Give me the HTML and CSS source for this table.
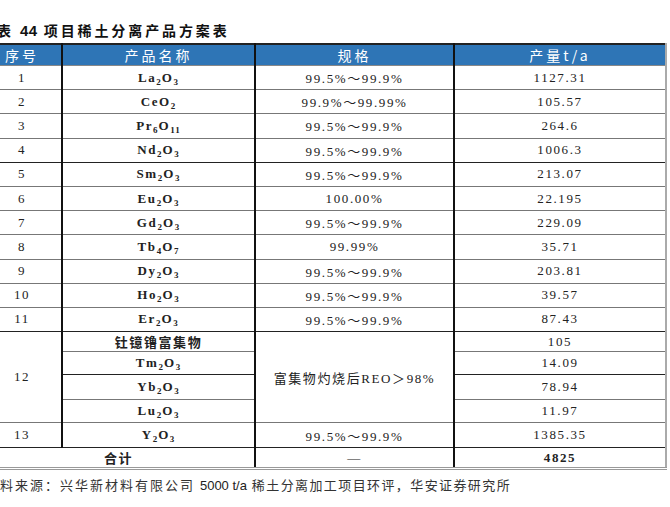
FILE: index.html
```html
<!DOCTYPE html>
<html lang="zh">
<head>
<meta charset="utf-8">
<link rel="stylesheet" href="styles.css">
</head>
<body>
<div class="page">
  <div class="title">表 <span class="num">44</span> 项目稀土分离产品方案表</div>
  <table class="tbl">
    <colgroup>
      <col class="c1"><col class="c2"><col class="c3"><col class="c4">
    </colgroup>
    <thead>
      <tr class="head"><th>序号</th><th>产品名称</th><th>规格</th><th>产量t/a</th></tr>
    </thead>
    <tbody>
      <tr class="r"><td>1</td><td class="f">La<sub>2</sub>O<sub>3</sub></td><td>99.5%～99.9%</td><td>1127.31</td></tr>
      <tr class="r"><td>2</td><td class="f">CeO<sub>2</sub></td><td>99.9%～99.99%</td><td>105.57</td></tr>
      <tr class="r"><td>3</td><td class="f">Pr<sub>6</sub>O<sub>11</sub></td><td>99.5%～99.9%</td><td>264.6</td></tr>
      <tr class="r dk"><td>4</td><td class="f">Nd<sub>2</sub>O<sub>3</sub></td><td>99.5%～99.9%</td><td>1006.3</td></tr>
      <tr class="r"><td>5</td><td class="f">Sm<sub>2</sub>O<sub>3</sub></td><td>99.5%～99.9%</td><td>213.07</td></tr>
      <tr class="r"><td>6</td><td class="f">Eu<sub>2</sub>O<sub>3</sub></td><td>100.00%</td><td>22.195</td></tr>
      <tr class="r"><td>7</td><td class="f">Gd<sub>2</sub>O<sub>3</sub></td><td>99.5%～99.9%</td><td>229.09</td></tr>
      <tr class="r"><td>8</td><td class="f">Tb<sub>4</sub>O<sub>7</sub></td><td>99.99%</td><td>35.71</td></tr>
      <tr class="r"><td>9</td><td class="f">Dy<sub>2</sub>O<sub>3</sub></td><td>99.5%～99.9%</td><td>203.81</td></tr>
      <tr class="r"><td>10</td><td class="f">Ho<sub>2</sub>O<sub>3</sub></td><td>99.5%～99.9%</td><td>39.57</td></tr>
      <tr class="r dk"><td>11</td><td class="f">Er<sub>2</sub>O<sub>3</sub></td><td>99.5%～99.9%</td><td>87.43</td></tr>
      <tr class="s1"><td rowspan="4">12</td><td class="f cn">钍镱镥富集物</td><td rowspan="4" class="cnt">富集物灼烧后REO＞98%</td><td>105</td></tr>
      <tr class="s2 dk"><td class="f">Tm<sub>2</sub>O<sub>3</sub></td><td>14.09</td></tr>
      <tr class="s3"><td class="f">Yb<sub>2</sub>O<sub>3</sub></td><td>78.94</td></tr>
      <tr class="s4"><td class="f">Lu<sub>2</sub>O<sub>3</sub></td><td>11.97</td></tr>
      <tr class="r13 dk"><td>13</td><td class="f">Y<sub>2</sub>O<sub>3</sub></td><td>99.5%～99.9%</td><td>1385.35</td></tr>
      <tr class="tot"><td colspan="2" class="cn b">合计</td><td>—</td><td class="b">4825</td></tr>
    </tbody>
  </table>
  <div class="src">资料来源：兴华新材料有限公司 <span class="lat">5000 t/a</span> <span class="tail">稀土分离加工项目环评，华安证券研究所</span></div>
</div>
</body>
</html>
```
FILE: styles.css
```css
html, body {
  margin: 0;
  padding: 0;
  background: #fff;
  overflow: hidden;
}
.page {
  width: 670px;
  height: 507px;
  padding-top: 20px;
  box-sizing: border-box;
}
.title {
  margin-left: -3px;
  height: 23px;
  font-family: "Noto Sans CJK SC", sans-serif;
  font-weight: bold;
  font-size: 14px;
  letter-spacing: 2.9px;
  line-height: 20px;
  color: #111;
}
.title .num {
  font-family: "Liberation Sans", sans-serif;
  font-weight: bold;
  font-size: 15px;
  letter-spacing: 0.5px;
}
.tbl {
  margin-left: -17px;
  border-collapse: collapse;
  table-layout: fixed;
  width: 683px;
  border-top: 2px solid #222;
  border-right: 2px solid #aaa;
}
.c1 { width: 79px; }
.c2 { width: 193px; }
.c3 { width: 199px; }
.c4 { width: 212px; }
.tbl th, .tbl td {
  padding: 0;
  text-align: center;
  vertical-align: middle;
  border-left: 2px solid #111;
  border-bottom: 1px solid #777;
  font-family: "Liberation Serif", "Noto Sans CJK SC", serif;
  font-size: 13px;
  letter-spacing: 1.6px;
  color: #222;
}
.tbl th:first-child, .tbl tr.r td:first-child, .tbl tr.r13 td:first-child, .tbl tr.s1 td:first-child, .tbl tr.tot td:first-child {
  border-left: none;
}
.head th {
  height: 20px;
  background: #2e75b6;
  color: #fff;
  font-family: "Noto Sans CJK SC", sans-serif;
  font-weight: normal;
  font-size: 14px;
  letter-spacing: 3px;
  border-bottom: 1px solid #888;
  border-left-color: #111;
}
.r td { height: 23.2px; }
.dk td { border-bottom-color: #222; }
.s1 td { height: 19px; }
.s2 td { height: 22px; }
.s3 td { height: 24px; }
.s4 td { height: 22px; }
.r13 td { height: 24px; }
.tot td { height: 19px; border-bottom: 3px double #999; }
.f {
  font-weight: bold;
  color: #111;
  letter-spacing: 1.2px;
}
.f sub {
  font-size: 9px;
  vertical-align: -3px;
  line-height: 0;
  letter-spacing: 1px;
}
.cn {
  font-family: "Noto Sans CJK SC", sans-serif;
  font-size: 13px;
  letter-spacing: 2.5px;
}
.b { font-weight: bold; color: #111; }
.cnt {
  font-family: "Noto Sans CJK SC", "Liberation Serif", sans-serif;
  font-size: 13px;
  letter-spacing: 1.2px;
  color: #333;
}
.src {
  margin-left: -15px;
  margin-top: 6px;
  font-family: "Noto Sans CJK SC", sans-serif;
  font-size: 13px;
  letter-spacing: 2px;
  color: #333;
  line-height: 18px;
}
.src .lat {
  font-family: "Liberation Sans", sans-serif;
  letter-spacing: 0;
  color: #222;
}
.src .tail {
  letter-spacing: 1.4px;
}
```
